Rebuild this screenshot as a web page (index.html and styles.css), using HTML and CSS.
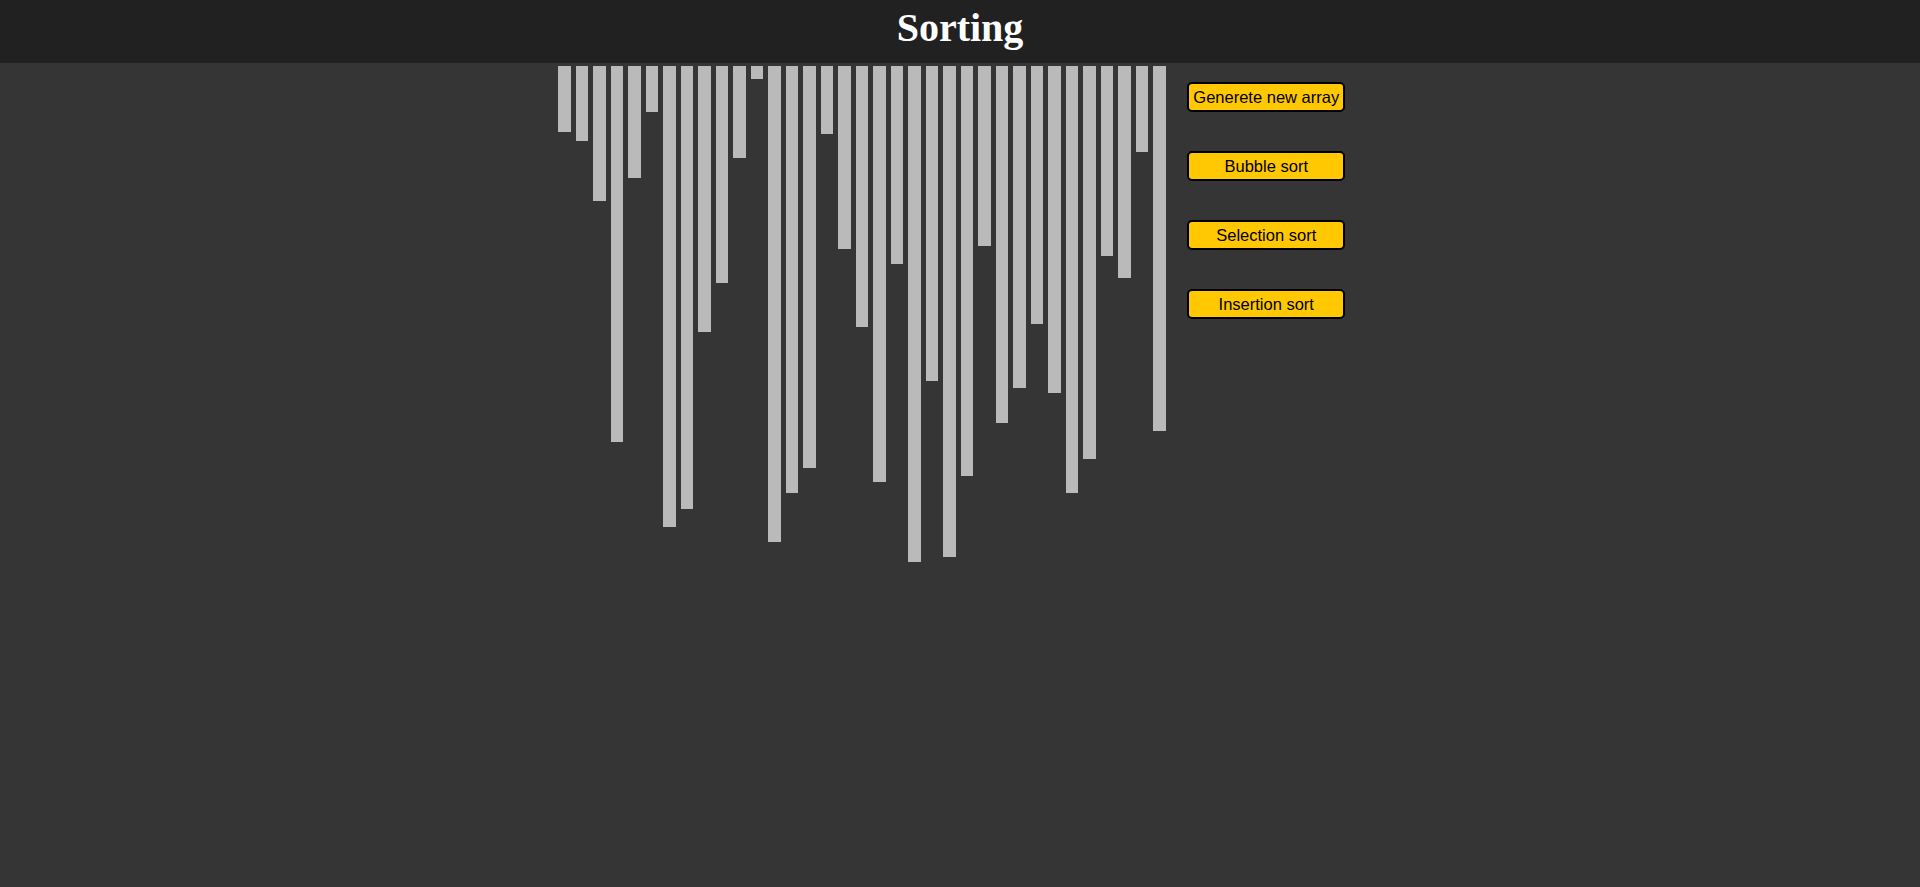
FILE: index.html
```html
<!DOCTYPE html>
<html lang="en">
<head>
<meta charset="utf-8">
<title>Sorting</title>
<link rel="stylesheet" href="styles.css">
</head>
<body>
<header class="topbar"><h1 class="title">Sorting</h1></header>
<main class="stage">
  <div class="bars">
    <div class="bar" style="height:66px"></div>
    <div class="bar" style="height:75px"></div>
    <div class="bar" style="height:135px"></div>
    <div class="bar" style="height:376px"></div>
    <div class="bar" style="height:112px"></div>
    <div class="bar" style="height:46px"></div>
    <div class="bar" style="height:461px"></div>
    <div class="bar" style="height:443px"></div>
    <div class="bar" style="height:266px"></div>
    <div class="bar" style="height:217px"></div>
    <div class="bar" style="height:92px"></div>
    <div class="bar" style="height:13px"></div>
    <div class="bar" style="height:476px"></div>
    <div class="bar" style="height:427px"></div>
    <div class="bar" style="height:402px"></div>
    <div class="bar" style="height:68px"></div>
    <div class="bar" style="height:183px"></div>
    <div class="bar" style="height:261px"></div>
    <div class="bar" style="height:416px"></div>
    <div class="bar" style="height:198px"></div>
    <div class="bar" style="height:496px"></div>
    <div class="bar" style="height:315px"></div>
    <div class="bar" style="height:491px"></div>
    <div class="bar" style="height:410px"></div>
    <div class="bar" style="height:180px"></div>
    <div class="bar" style="height:357px"></div>
    <div class="bar" style="height:322px"></div>
    <div class="bar" style="height:258px"></div>
    <div class="bar" style="height:327px"></div>
    <div class="bar" style="height:427px"></div>
    <div class="bar" style="height:393px"></div>
    <div class="bar" style="height:190px"></div>
    <div class="bar" style="height:212px"></div>
    <div class="bar" style="height:86px"></div>
    <div class="bar" style="height:365px"></div>
  </div>
  <div class="controls">
    <button class="btn">Generete new array</button>
    <button class="btn">Bubble sort</button>
    <button class="btn">Selection sort</button>
    <button class="btn">Insertion sort</button>
  </div>
</main>
</body>
</html>
```

FILE: styles.css
```css
html, body {
  margin: 0;
  padding: 0;
}
body {
  background: #353535;
  min-height: 887px;
}
.topbar {
  box-sizing: border-box;
  height: 63px;
  padding-top: 6px;
  background: #212121;
  text-align: center;
}
.title {
  margin: 0;
  font-family: "Liberation Serif", "Times New Roman", serif;
  font-weight: bold;
  font-size: 40px;
  line-height: 44px;
  color: #ffffff;
}
.stage {
  display: flex;
  justify-content: center;
  align-items: flex-start;
  padding-top: 3px;
}
.bars {
  display: flex;
  align-items: flex-start;
  width: 612.5px;
}
.bar {
  width: 12.5px;
  margin: 0 2.5px;
  background: #bababa;
  flex: none;
}
.controls {
  width: 196.5px;
  display: flex;
  flex-direction: column;
  align-items: center;
  gap: 39px;
  padding-top: 16px;
}
.btn {
  box-sizing: border-box;
  width: 158px;
  height: 30px;
  padding: 0;
  background: #ffc800;
  color: #000;
  border: 2px solid #000;
  border-radius: 5px;
  font-family: "Liberation Sans", Arial, sans-serif;
  font-size: 16.5px;
  cursor: pointer;
}
```
